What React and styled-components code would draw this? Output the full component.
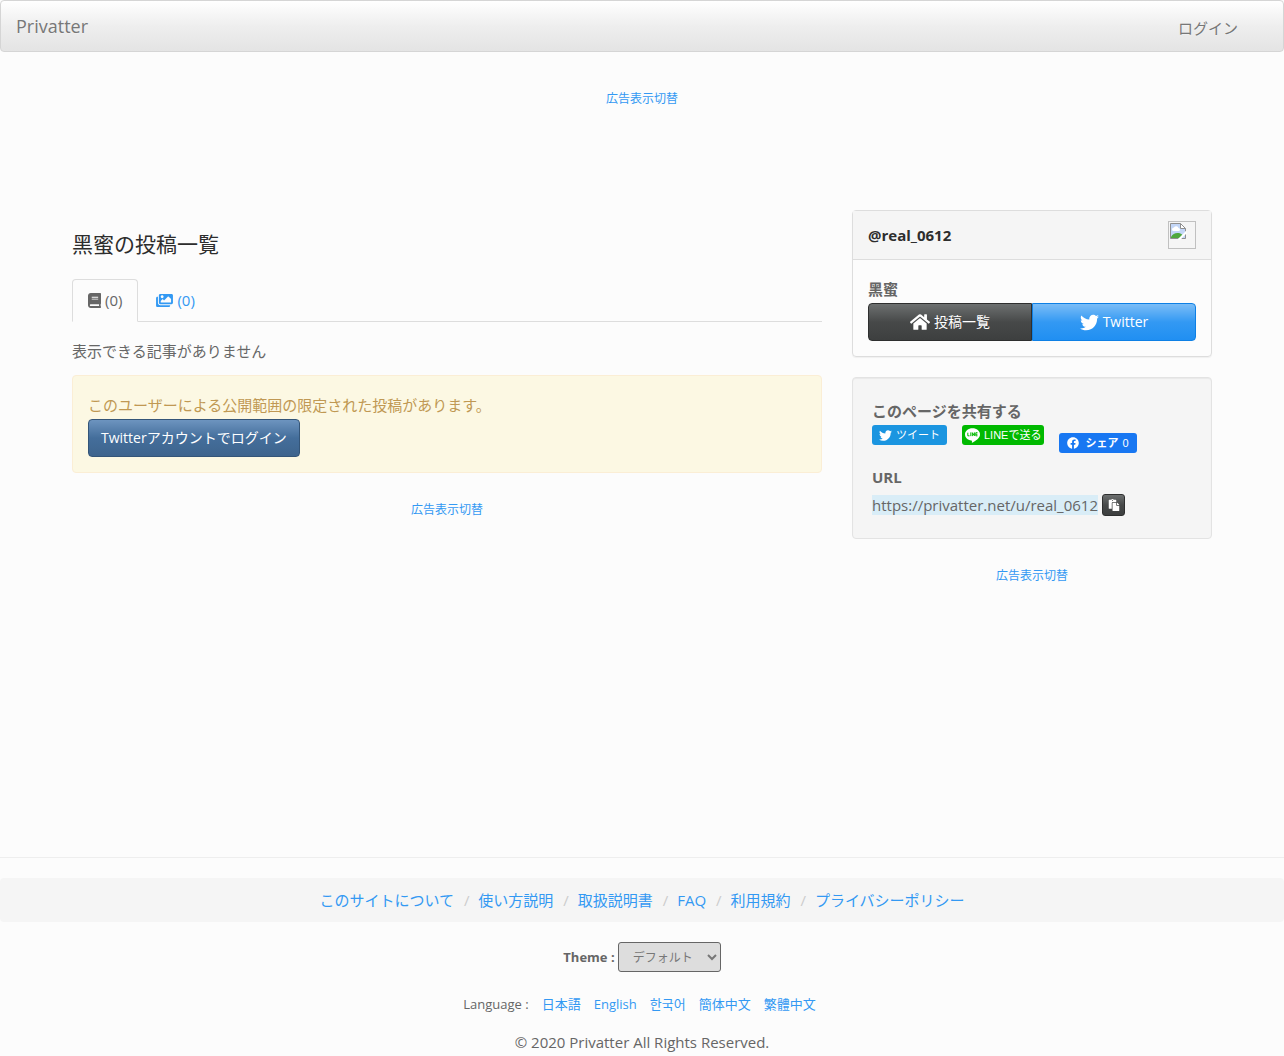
import React from "react";
import styled, { createGlobalStyle, css } from "styled-components";
import {
  FaBook,
  FaImages,
  FaHome,
  FaTwitter,
  FaFacebook,
  FaPaste,
} from "react-icons/fa";

const GlobalStyle = createGlobalStyle`
  * {
    box-sizing: border-box;
  }

  body {
    margin: 0;
    background-color: #fcfcfc;
    color: #666;
    font-family: "Open Sans", "Noto Sans CJK JP", sans-serif;
    font-size: 15px;
    line-height: 28px;
  }

  a {
    color: #3399f3;
    text-decoration: none;
  }
`;

const Navbar = styled.nav`
  display: flex;
  align-items: center;
  justify-content: space-between;
  min-height: 52px;
  padding: 0 45px 0 15px;
  border: 1px solid #d5d5d5;
  border-radius: 4px;
  background-image: linear-gradient(#fff, #eee 50%, #e4e4e4);
  text-shadow: 0 1px 0 rgba(255, 255, 255, 0.3);
`;

const Brand = styled.a`
  color: #777;
  font-size: 18px;
`;

const NavLink = styled.a`
  padding-top: 4px;
  color: #777;
`;

const AdBox = styled.div`
  min-height: ${({ $height }) => $height}px;
  margin-top: 23px;
  text-align: center;
  font-size: 12px;
`;

const TopAd = styled(AdBox)`
  margin: 33px 0 8px;
`;

const Container = styled.div`
  display: grid;
  grid-template-columns: minmax(0, 750fr) minmax(0, 360fr);
  gap: 30px;
  max-width: 1170px;
  margin: 0 auto;
  padding: 0 15px;

  @media (max-width: 991px) {
    grid-template-columns: 1fr;
  }
`;

const Heading = styled.h1`
  margin: 20px 0;
  color: #2d2d2d;
  font-size: 21px;
  font-weight: 400;
  line-height: 29px;
`;

const Tabs = styled.div`
  display: flex;
  gap: 2px;
  border-bottom: 1px solid #ddd;
`;

const Tab = styled.button`
  display: flex;
  align-items: center;
  gap: 4px;
  height: 43px;
  margin-bottom: -1px;
  padding: 0 15px 1px;
  border: 1px solid transparent;
  border-radius: 4px 4px 0 0;
  background: none;
  color: #3399f3;
  font: inherit;
  cursor: pointer;

  svg {
    width: ${({ $iconWidth }) => $iconWidth}px;
    height: 15px;
  }

  ${({ $active }) =>
    $active &&
    css`
      border-color: #ddd #ddd transparent;
      background-color: #fcfcfc;
      color: #666;
    `}
`;

const Message = styled.p`
  margin: 15px 0 10px;
`;

const Alert = styled.div`
  padding: 15px;
  border: 1px solid #fbeed5;
  border-radius: 4px;
  background-color: #fcf8e3;
  color: #c09853;
`;

const variants = {
  default: css`
    border-color: #2e2f2f;
    background-image: linear-gradient(#6d7070, #474949 50%, #3d3f3f);
  `,
  primary: css`
    border-color: #345578;
    background-image: linear-gradient(#6d94bf, #446e9b 50%, #3e648d);
  `,
  info: css`
    border-color: #0e80e5;
    background-image: linear-gradient(#7bbdf7, #3399f3 50%, #208ff2);
  `,
};

const Button = styled.a`
  display: inline-flex;
  align-items: center;
  justify-content: center;
  gap: 4px;
  height: 38px;
  padding: 0 12px;
  border: 1px solid;
  border-radius: 4px;
  color: #fff;
  font-size: 14px;
  line-height: 20px;
  vertical-align: top;
  ${({ $variant }) => variants[$variant]}
`;

const ButtonGroup = styled.div`
  display: flex;

  & > ${Button} {
    flex: 1;
  }

  & > ${Button}:first-child {
    border-radius: 4px 0 0 4px;
  }

  & > ${Button}:last-child {
    border-radius: 0 4px 4px 0;
  }
`;

const Panel = styled.section`
  border: 1px solid #ddd;
  border-radius: 4px;
  box-shadow: 0 1px 1px rgba(0, 0, 0, 0.05);
`;

const PanelHeading = styled.header`
  display: flex;
  align-items: center;
  justify-content: space-between;
  padding: 10px 15px;
  border-bottom: 1px solid #ddd;
  background-color: #f5f5f5;
  color: #2d2d2d;
  font-weight: 700;
`;

const PanelBody = styled.div`
  padding: 15px;
`;

const Avatar = styled.svg`
  display: block;
  width: 28px;
  height: 28px;
`;

const Strong = styled.div`
  font-weight: 700;
`;

const Well = styled.section`
  margin: 20px 0;
  padding: 19px;
  border: 1px solid #e3e3e3;
  border-radius: 4px;
  background-color: #f5f5f5;
  box-shadow: inset 0 1px 1px rgba(0, 0, 0, 0.05);
`;

const ShareRow = styled.div`
  display: flex;
  align-items: flex-start;
  gap: 15px;
  min-height: 38px;
`;

const ShareButton = styled.a`
  display: flex;
  align-items: center;
  gap: 4px;
  height: 20px;
  padding: 0 ${({ $padding }) => $padding}px;
  border-radius: 3px;
  background-color: ${({ $color }) => $color};
  color: #fff;
  font-family: "Liberation Sans", "Noto Sans CJK JP", sans-serif;
  font-size: 11px;
  line-height: 20px;
`;

const FacebookButton = styled(ShareButton)`
  gap: 6px;
  margin-top: 8px;
`;

const ShareCount = styled.span`
  display: flex;
  gap: 4px;
`;

const UrlRow = styled.div`
  display: flex;
  align-items: center;
  gap: 4px;
  min-height: 28px;
`;

const Url = styled.span`
  background-color: #d9edf7;
  line-height: 20px;
`;

const CopyButton = styled.button`
  display: flex;
  align-items: center;
  justify-content: center;
  width: 23px;
  height: 22px;
  padding: 0;
  border: 1px solid;
  border-radius: 3px;
  color: #fff;
  cursor: pointer;
  ${variants.default}
`;

const Footer = styled.footer`
  border-top: 1px solid #eee;
  padding-top: 20px;
`;

const Breadcrumb = styled.ul`
  display: flex;
  flex-wrap: wrap;
  justify-content: center;
  gap: 5px;
  margin: 0 0 20px;
  padding: 8px 15px;
  border-radius: 4px;
  background-color: #f5f5f5;
  list-style: none;

  li + li::before {
    content: "/\\00a0";
    padding: 0 5px;
    color: #ccc;
  }
`;

const ThemeRow = styled.div`
  display: flex;
  align-items: center;
  justify-content: center;
  gap: 3px;
  font-size: 13px;
  font-weight: 700;
`;

const ThemeSelect = styled.select`
  height: 30px;
  padding: 5px 10px;
  border: 1px solid #666;
  border-radius: 3px;
  background-color: #ddd;
  color: #777;
  font-family: inherit;
  font-size: 12px;
`;

const Languages = styled.div`
  display: flex;
  flex-wrap: wrap;
  justify-content: center;
  gap: 13px;
  margin: 18px 0 10px;
  padding-right: 5px;
  font-size: 13px;
`;

const KoreanLink = styled.a`
  font-family: "Noto Sans CJK KR", sans-serif;
`;

const Copyright = styled.div`
  text-align: center;
`;

const footerLinks = [
  "このサイトについて",
  "使い方説明",
  "取扱説明書",
  "FAQ",
  "利用規約",
  "プライバシーポリシー",
];

const AdToggle = () => <a href="#ads">広告表示切替</a>;

const MissingAvatar = () => (
  <Avatar viewBox="0 0 28 28" role="img" aria-label="avatar">
    <rect x="0.5" y="0.5" width="27" height="27" fill="none" stroke="#c0c0c0" />
    <path d="M2.5 2.5h10l5 5v10h-15z" fill="#c3d6f7" />
    <path
      d="M4 8.500a2 2 0 0 1 2-2 2.400 2.400 0 0 1 4.500.5 1.500 1.500 0 0 1 0 3H5.500a1.500 1.500 0 0 1-1.500-1.500z"
      fill="#fff"
    />
    <path d="M3 17.500v-1.500c1.500-3 4.500-4.500 7.500-4 1.800.2 3 1 4 2l-3.500 3.500z" fill="#4fa83d" />
    <path d="M12.500 2.500v5h5z" fill="#fff" />
    <path
      d="M10 17.500h-7.500v-15h10l5 5v3M12.500 2.500v5h5M17.500 13v4.500h-4"
      fill="none"
      stroke="#8f8f8f"
    />
    <path d="M9.500 18.500l9-9v3l-6 6z" fill="#fff" />
  </Avatar>
);

const LineIcon = () => (
  <svg width="15" height="15" viewBox="0 0 24 24" aria-hidden="true">
    <path
      d="M24 10.314C24 4.943 18.615.572 12 .572S0 4.943 0 10.314c0 4.811 4.270 8.842 10.035 9.608.391.082.923.258 1.058.590.120.301.079.766.038 1.080l-.164 1.020c-.045.301-.240 1.186 1.049.645 1.291-.539 6.916-4.078 9.436-6.975C23.176 14.393 24 12.458 24 10.314"
      fill="#fff"
    />
    <path
      d="M4.500 7.500v5h2.700M9.300 7v6M11.800 13V7.500l3.200 5V7M20 7.500h-2.700v5H20M17 10h2.800"
      fill="none"
      stroke="#00b900"
      strokeWidth="1.600"
    />
  </svg>
);

const Sidebar = () => (
  <aside>
    <Panel>
      <PanelHeading>
        @real_0612
        <MissingAvatar />
      </PanelHeading>
      <PanelBody>
        <Strong>黑蜜</Strong>
        <ButtonGroup>
          <Button href="#posts" $variant="default">
            <FaHome size={20} />
            投稿一覧
          </Button>
          <Button href="#twitter" $variant="info">
            <FaTwitter size={19} />
            Twitter
          </Button>
        </ButtonGroup>
      </PanelBody>
    </Panel>
    <Well>
      <Strong>このページを共有する</Strong>
      <ShareRow>
        <ShareButton href="#tweet" $color="#1b95e0" $padding={7}>
          <FaTwitter size={13} />
          ツイート
        </ShareButton>
        <ShareButton href="#line" $color="#00b900" $padding={3}>
          <LineIcon />
          LINEで送る
        </ShareButton>
        <FacebookButton href="#facebook" $color="#1877f2" $padding={8}>
          <FaFacebook size={12} />
          <ShareCount>
            <b>シェア</b>
            <span>0</span>
          </ShareCount>
        </FacebookButton>
      </ShareRow>
      <Strong>URL</Strong>
      <UrlRow>
        <Url>https://privatter.net/u/real_0612</Url>
        <CopyButton type="button" aria-label="URLをコピー">
          <FaPaste size={12} />
        </CopyButton>
      </UrlRow>
    </Well>
    <AdBox $height={295}>
      <AdToggle />
    </AdBox>
  </aside>
);

const App = () => {
  return (
    <>
      <GlobalStyle />
      <Navbar>
        <Brand href="#top">Privatter</Brand>
        <NavLink href="#login">ログイン</NavLink>
      </Navbar>
      <TopAd $height={117}>
        <AdToggle />
      </TopAd>
      <Container>
        <main>
          <Heading>黑蜜の投稿一覧</Heading>
          <Tabs>
            <Tab type="button" $iconWidth={13} $active>
              <FaBook />
              (0)
            </Tab>
            <Tab type="button" $iconWidth={17}>
              <FaImages />
              (0)
            </Tab>
          </Tabs>
          <Message>表示できる記事がありません</Message>
          <Alert>
            <div>このユーザーによる公開範囲の限定された投稿があります。</div>
            <Button href="#login" $variant="primary">
              Twitterアカウントでログイン
            </Button>
          </Alert>
          <AdBox $height={28}>
            <AdToggle />
          </AdBox>
        </main>
        <Sidebar />
      </Container>
      <Footer>
        <Breadcrumb>
          {footerLinks.map((label) => (
            <li key={label}>
              <a href="#info">{label}</a>
            </li>
          ))}
        </Breadcrumb>
        <ThemeRow>
          <label htmlFor="theme">Theme :</label>
          <ThemeSelect id="theme">
            <option>デフォルト</option>
          </ThemeSelect>
        </ThemeRow>
        <Languages>
          <span>Language :</span>
          <a href="#ja">日本語</a>
          <a href="#en">English</a>
          <KoreanLink href="#ko">한국어</KoreanLink>
          <a href="#zh-cn">簡体中文</a>
          <a href="#zh-tw">繁體中文</a>
        </Languages>
        <Copyright>© 2020 Privatter All Rights Reserved.</Copyright>
      </Footer>
    </>
  );
};

export default App;
